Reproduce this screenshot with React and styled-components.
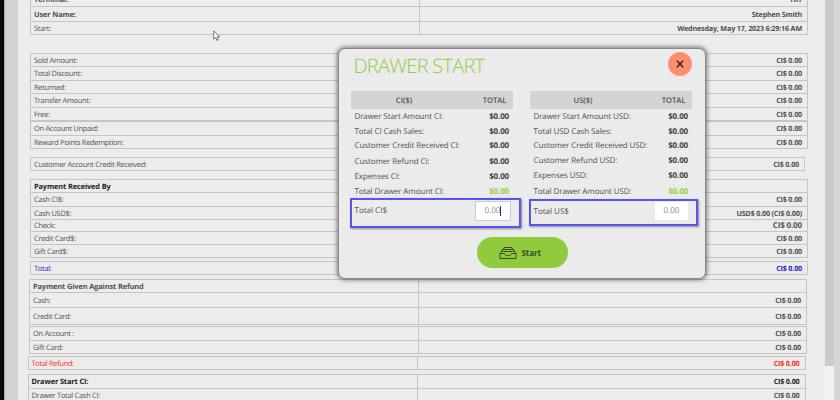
import React from 'react';
import styled, { createGlobalStyle } from 'styled-components';

const GlobalStyle = createGlobalStyle`
  * { box-sizing: border-box; }
  body { margin: 0; overflow: hidden; font-family: "Open Sans", "Noto Sans", sans-serif; color: #505050; text-rendering: geometricPrecision; }
`;

const Screen = styled.div`
  position: relative;
  display: flex;
  width: 840px;
  height: 400px;
  overflow: hidden;
  background: #ececec;
`;
const Edge = styled.div`
  width: 18px;
  flex: none;
  background: #d4d4d4;
  border-left: 4px solid #0c0a09;
  box-shadow: inset 1px 0 #a9a9a9;
`;
const Report = styled.main`
  flex: 1;
  min-width: 0;
`;
const ScrollTrack = styled.div`
  width: 9px;
  flex: none;
  background: #f1f1f1;
`;
const ScrollThumb = styled.div`
  height: 366px;
  background: #cbcbcb;
`;
const Gutter = styled.div`
  width: 6px;
  flex: none;
  background: #d5d5d5;
`;

const Group = styled.section`
  width: ${(p) => p.$width}px;
  margin-left: ${(p) => p.$left}px;
  margin-top: ${(p) => p.$gap}px;
  border: 1px solid #c5c5c5;
  border-top: 0;
`;
const Row = styled.div`
  display: flex;
  height: ${(p) => p.$height}px;
  border-top: 1px solid #c5c5c5;
  color: ${(p) => p.$color || '#505050'};
`;
const Cell = styled.div`
  display: flex;
  align-items: center;
  width: ${(p) => (p.$value ? 'auto' : '388px')};
  flex: ${(p) => (p.$value ? '1' : 'none')};
  justify-content: ${(p) => (p.$value ? 'flex-end' : 'flex-start')};
  padding: ${(p) => (p.$value ? '1px 5px 0 0' : '1px 0 0 3px')};
  border-left: ${(p) => (p.$value ? '1px solid #c5c5c5' : '0')};
  font-size: ${(p) => p.$size || (p.$value ? 7.2 : 7.4)}px;
  font-weight: ${(p) => (p.$bold ? 700 : 400)};
  letter-spacing: ${(p) => (p.$value ? '-0.18px' : p.$bold ? '-0.12px' : '-0.25px')};
  white-space: nowrap;
  line-height: 10px;
`;

const Modal = styled.div`
  position: absolute;
  left: 338px;
  top: 48px;
  width: 368px;
  height: 231px;
  padding: 0 12px;
  background: #ebebeb;
  border: 1px solid #8a8a8a;
  border-radius: 7px;
  box-shadow: 0 0 4px 1px rgba(0, 0, 0, 0.5);
`;
const ModalHead = styled.header`
  display: flex;
  justify-content: space-between;
  height: 42px;
  padding: 3px 1.5px 0 2.5px;
`;
const Title = styled.h1`
  margin: 0;
  font-size: 20px;
  line-height: 27px;
  font-weight: 300;
  letter-spacing: -0.75px;
  color: #93cd40;
  white-space: nowrap;
`;
const CloseButton = styled.button`
  display: flex;
  align-items: center;
  justify-content: center;
  width: 24px;
  height: 24px;
  padding: 0;
  border: 0;
  border-radius: 50%;
  background: #fc8e70;
`;
const Columns = styled.div`
  display: flex;
  gap: 17px;
  height: 146px;
`;
const Currency = styled.section`
  width: 162px;
  flex: none;
`;
const CurrencyHead = styled.div`
  display: flex;
  align-items: center;
  height: 18px;
  padding-top: 1px;
  background: #d4d4d4;
  font-size: 7.6px;
  font-weight: 600;
`;
const HeadName = styled.span`
  width: 106px;
  text-align: center;
`;
const HeadTotal = styled.span`
  flex: 1;
  text-align: right;
  padding-right: 6.5px;
`;
const Line = styled.div`
  display: flex;
  align-items: center;
  justify-content: space-between;
  height: ${(p) => p.$height}px;
  padding: 0.5px 4px 0 3.5px;
  font-size: 8px;
  letter-spacing: -0.1px;
  white-space: nowrap;
`;
const Amount = styled.span`
  font-weight: 700;
  letter-spacing: -0.15px;
  color: ${(p) => (p.$accent ? '#98d043' : '#404040')};
`;
const EntryBox = styled.div`
  display: flex;
  justify-content: space-between;
  width: ${(p) => p.$width}px;
  height: ${(p) => p.$height}px;
  margin-left: -1px;
  padding: 1px 8px 0 2.5px;
  border: 2px solid #5555f2;
  box-shadow: 1px 1px 2px rgba(0, 0, 0, 0.4);
  font-size: 8px;
  line-height: 19px;
`;
const Entry = styled.span`
  display: flex;
  align-items: center;
  justify-content: center;
  width: ${(p) => (p.$active ? 36 : 33)}px;
  height: ${(p) => (p.$active ? 20 : 18)}px;
  padding-bottom: 1px;
  background: #fff;
  border: ${(p) => (p.$active ? '1px solid #b9cef3' : '0')};
  color: #7c8791;
`;
const Caret = styled.i`
  width: 1px;
  height: 10px;
  background: #333;
`;
const StartButton = styled.button`
  display: flex;
  align-items: center;
  gap: 4.5px;
  width: 91px;
  height: 31px;
  margin: 0 0 0 126px;
  padding: 0 0 0 22px;
  border: 0;
  border-radius: 16px;
  background: #90cb3e;
  color: #3b4a2c;
  font: 700 8px "Open Sans", sans-serif;
  letter-spacing: -0.1px;
`;
const Pointer = styled.svg`
  position: absolute;
  left: 213px;
  top: 30px;
`;

const groups = [
  { left: 12, width: 778, gap: -9, rows: [
    [15, 'Terminal:', 'TRT', { bold: true }],
    [15, 'User Name:', 'Stephen Smith', { bold: true }],
    [13, 'Start:', 'Wednesday, May 17, 2023 6:29:16 AM'],
  ] },
  { left: 12, width: 778, gap: 18, rows: [
    [13, 'Sold Amount:'], [14, 'Total Discount:'], [13, 'Returned:'],
    [14, 'Transfer Amount:'], [13, 'Free:'],
  ] },
  { left: 12, width: 778, gap: 0, rows: [[14, 'On Account Unpaid:'], [13, 'Reward Points Redemption:']] },
  { left: 12, width: 775, gap: 8, rows: [[13, 'Customer Account Credit Received:']] },
  { left: 12, width: 778, gap: 8, rows: [
    [13, 'Payment Received By', '', { bold: true, color: '#1c1c1c' }],
    [14, 'Cash CI$:'], [13, 'Cash USD$:', 'USD$ 0.00 (CI$ 0.00)'],
    [12, 'Check:', 'CI$ 0.00', { valueSize: 8.1 }], [13, 'Credit Card$:'], [13, 'Gift Card$:'],
  ] },
  { left: 12, width: 778, gap: 3, rows: [[13, 'Total:', 'CI$ 0.00', { color: '#2720c8' }]] },
  { left: 11, width: 778, gap: 4, rows: [
    [13, 'Payment Given Against Refund', '', { bold: true }], [15, 'Cash:'], [17, 'Credit Card:'],
  ] },
  { left: 11, width: 778, gap: 1, rows: [[14, 'On Account :'], [13, 'Gift Card:']] },
  { left: 9.5, width: 778, gap: 2, rows: [[13, 'Total Refund:', 'CI$ 0.00', { color: '#fb2a22' }]] },
  { left: 9.5, width: 778, gap: 4, rows: [
    [14, 'Drawer Start CI:', 'CI$ 0.00', { bold: true, color: '#1c1c1c' }], [14, 'Drawer Total Cash CI:'],
  ] },
];

const ciLines = [
  [15, 'Drawer Start Amount CI:'], [14, 'Total CI Cash Sales:'], [15, 'Customer Credit Received CI:'],
  [15.5, 'Customer Refund CI:'], [15, 'Expenses CI:'], [14.5, 'Total Drawer Amount CI:'],
];
const usLines = [
  [15, 'Drawer Start Amount USD:'], [14, 'Total USD Cash Sales:'], [14.5, 'Customer Credit Received USD:'],
  [15, 'Customer Refund USD:'], [15, 'Expenses USD:'], [16.5, 'Total Drawer Amount USD:'],
];

function ReportRow({ row }) {
  const [height, label, value = 'CI$ 0.00', o = {}] = row;
  return (
    <Row $height={height} $color={o.color}>
      <Cell $bold={o.bold}>{label}</Cell>
      <Cell $value $bold $size={o.valueSize}>{value}</Cell>
    </Row>
  );
}

function CurrencyPanel({ name, lines, entryLabel, width, height, active }) {
  return (
    <Currency>
      <CurrencyHead><HeadName>{name}</HeadName><HeadTotal>TOTAL</HeadTotal></CurrencyHead>
      {lines.map(([h, label], i) => (
        <Line key={label} $height={h}>
          <span>{label}</span>
          <Amount $accent={i === lines.length - 1}>$0.00</Amount>
        </Line>
      ))}
      <EntryBox $width={width} $height={height}>
        <span>{entryLabel}</span>
        <Entry $active={active}>0.00{active && <Caret />}</Entry>
      </EntryBox>
    </Currency>
  );
}

export default function App() {
  return (
    <>
      <GlobalStyle />
      <Screen>
        <Edge />
        <Report>
          {groups.map((g, i) => (
            <Group key={i} $left={g.left} $width={g.width} $gap={g.gap}>
              {g.rows.map((row) => <ReportRow key={row[1]} row={row} />)}
            </Group>
          ))}
        </Report>
        <ScrollTrack><ScrollThumb /></ScrollTrack>
        <Gutter />
        <Pointer width="8" height="12" viewBox="0 0 8 12">
          <path d="M.7.9v8.2l1.9-1.7 1.3 3 1.4-.6-1.3-2.9h2.6z" fill="#fff" stroke="#555" strokeWidth=".8" />
        </Pointer>
        <Modal>
          <ModalHead>
            <Title>DRAWER START</Title>
            <CloseButton aria-label="Close">
              <svg width="8" height="8" viewBox="0 0 8 8"><path d="M.8.8L7.2 7.2M7.2.8L.8 7.2" stroke="#2b1713" strokeWidth="1.3" /></svg>
            </CloseButton>
          </ModalHead>
          <Columns>
            <CurrencyPanel name="CI($)" lines={ciLines} entryLabel="Total CI$" width={171} height={30} active />
            <CurrencyPanel name="US($)" lines={usLines} entryLabel="Total US$" width={169} height={27} />
          </Columns>
          <StartButton>
            <svg width="18" height="14" viewBox="0 0 18 14" fill="none" stroke="#3b4a2c" strokeWidth="1" strokeLinejoin="round">
              <path d="M1 7.5H5.5C6 10.5 12 10.5 12.5 7.5H17V12.5H1ZM1 7.5L3.5 3.5M17 7.5L14.5 3.5M3.5 6V3.5H14.5V6M4.5 3.5L5 1.5H13L13.5 3.5M4.5 5.5H13.5" />
            </svg>
            Start
          </StartButton>
        </Modal>
      </Screen>
    </>
  );
}
